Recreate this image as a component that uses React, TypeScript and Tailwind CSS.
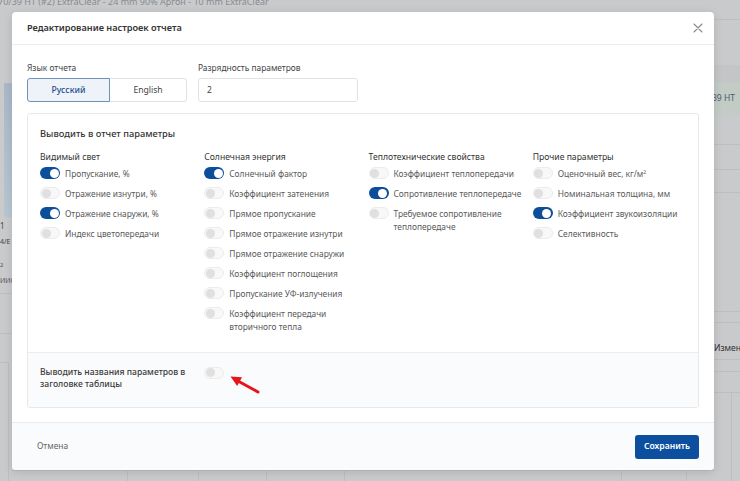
import React from "react";

type Item = { label: React.ReactNode; on?: boolean };

function Toggle({ on }: { on?: boolean }) {
  if (on) {
    return (
      <span className="flex h-[12px] w-[20px] shrink-0 items-center justify-end rounded-full bg-[#0d4e9b] px-[1.5px]">
        <span className="h-[9px] w-[9px] rounded-full bg-white" />
      </span>
    );
  }
  return (
    <span className="flex h-[12px] w-[20px] shrink-0 items-center justify-start rounded-full border border-[#ececec] bg-[#f8f8f8] px-[0.5px]">
      <span className="h-[9px] w-[9px] rounded-full bg-[#e0e0e0]" />
    </span>
  );
}

function Column({ title, items }: { title: string; items: Item[] }) {
  return (
    <div className="flex flex-col">
      <div className="mb-[3.5px] text-[8.6px] leading-[12px] text-[#333]">{title}</div>
      <div className="flex flex-col gap-[7px]">
        {items.map((it, i) => (
          <div key={i} className="flex items-start gap-[5px]">
            <span className="mt-[0.5px]">
              <Toggle on={it.on} />
            </span>
            <span className="text-[8.4px] leading-[13px] text-[#5a5a5a]">{it.label}</span>
          </div>
        ))}
      </div>
    </div>
  );
}

export default function App() {
  const cols: { title: string; items: Item[] }[] = [
    {
      title: "Видимый свет",
      items: [
        { label: "Пропускание, %", on: true },
        { label: "Отражение изнутри, %" },
        { label: "Отражение снаружи, %", on: true },
        { label: "Индекс цветопередачи" },
      ],
    },
    {
      title: "Солнечная энергия",
      items: [
        { label: "Солнечный фактор", on: true },
        { label: "Коэффициент затенения" },
        { label: "Прямое пропускание" },
        { label: "Прямое отражение изнутри" },
        { label: "Прямое отражение снаружи" },
        { label: "Коэффициент поглощения" },
        { label: "Пропускание УФ-излучения" },
        {
          label: (
            <>
              Коэффициент передачи
              <br />
              вторичного тепла
            </>
          ),
        },
      ],
    },
    {
      title: "Теплотехнические свойства",
      items: [
        { label: "Коэффициент теплопередачи" },
        { label: "Сопротивление теплопередаче", on: true },
        {
          label: (
            <>
              Требуемое сопротивление
              <br />
              теплопередаче
            </>
          ),
        },
      ],
    },
    {
      title: "Прочие параметры",
      items: [
        {
          label: (
            <>
              Оценочный вес, кг/м<sup className="text-[5px]">2</sup>
            </>
          ),
        },
        { label: "Номинальная толщина, мм" },
        { label: "Коэффициент звукоизоляции", on: true },
        { label: "Селективность" },
      ],
    },
  ];

  return (
    <div className="relative h-[481px] w-[740px] overflow-hidden bg-[#c9cacc] font-['Noto_Sans','Open_Sans',sans-serif]">
      {/* background page (dimmed) */}
      <div className="flex h-full w-full flex-col">
        <div className="h-[12px] overflow-hidden">
          <div className="-ml-[2px] -mt-[4px] whitespace-nowrap text-[9px] leading-[12px] text-[#8a8b8d]">
            70/39 HT (#2) ExtraClear - 24 mm 90% Аргон - 10 mm ExtraClear
          </div>
        </div>
        <div className="flex flex-1">
          {/* left sliver */}
          <div className="flex w-[12px] flex-col">
            <div className="h-[71px]" />
            <div className="ml-[4px] h-[134px] bg-gradient-to-b from-[#aab8c8] to-[#b8c6d4]" />
            <div className="mt-[4px] text-[8px] leading-[10px] text-[#444]">1</div>
            <div className="mt-[6px] whitespace-nowrap text-[7px] leading-[10px] text-[#444]">4/E</div>
            <div className="mt-[14px] text-[6px] leading-[8px] text-[#555]">2</div>
            <div className="mt-[8px] whitespace-nowrap text-[7px] leading-[8px] text-[#555]">ИИС</div>
            <div className="mt-[8px] h-[40px] border-t border-[#bdbec0]" />
            <div className="h-[29px] border-t border-[#bdbec0]" />
            <div className="mr-[3px] flex-1 border-r border-t border-[#bdbec0]" />
          </div>
          <div className="flex flex-1 flex-col justify-end">
            <div className="flex h-[11px] border-t border-[#bdbec0]">
              <div className="w-[116px] border-r border-[#bdbec0]" />
              <div className="w-[71px] border-r border-[#bdbec0]" />
              <div className="w-[68px] border-r border-[#bdbec0]" />
              <div className="w-[78px] border-r border-[#bdbec0]" />
              <div className="w-[277px] border-r border-[#bdbec0]" />
              <div className="w-[65px] border-r border-[#bdbec0]" />
            </div>
          </div>
          {/* right sliver */}
          <div className="flex w-[26px] flex-col">
            <div className="h-[8px] border-b border-[#bdbec0]" />
            <div className="h-[45px]" />
            <div className="h-[17px] bg-[#c3c5c7]" />
            <div className="flex h-[33px] items-center whitespace-nowrap bg-[#c2ccc4] text-[8.5px] text-[#4b5a6c]">
              <span className="-ml-[2px]">39 HT</span>
            </div>
            <div className="h-[30px] border-b border-[#bdbec0]" />
            <div className="h-[25px] border-b border-[#bdbec0]" />
            <div className="h-[23px] border-b border-[#bdbec0]" />
            <div className="h-[119px] border-b border-[#bdbec0]" />
            <div className="h-[11px] border-b border-[#bdbec0]" />
            <div className="h-[12px]" />
            <div className="h-[25px] whitespace-nowrap border-b border-[#bdbec0] text-[8.5px] leading-[25px] text-[#333]">
              Измен
            </div>
            <div className="h-[12px] border-b border-[#bdbec0]" />
            <div className="h-[21px] border-b border-[#bdbec0]" />
            <div className="flex flex-1">
              <div className="w-[18px] border-r border-[#bdbec0]" />
            </div>
          </div>
        </div>
      </div>

      {/* modal */}
      <div className="absolute left-[12px] top-[12px] flex h-[458px] w-[702px] flex-col overflow-hidden rounded-[4px] bg-white shadow-[0_2px_10px_rgba(0,0,0,0.12)]">
        {/* header */}
        <div className="flex h-[33px] shrink-0 items-center justify-between border-b border-[#ebebeb] pl-[15px] pr-[11px]">
          <span className="text-[9.2px] font-semibold text-[#333]">Редактирование настроек отчета</span>
          <svg width="10" height="10" viewBox="0 0 10 10" className="text-[#8a8a8a]">
            <path d="M1 1L9 9M9 1L1 9" stroke="currentColor" strokeWidth="1.1" strokeLinecap="round" />
          </svg>
        </div>

        {/* body */}
        <div className="flex flex-1 flex-col px-[15px] pb-[14px] pt-[17px]">
          <div className="flex gap-[11px]">
            <div className="flex flex-col">
              <div className="mb-[4px] text-[8.4px] leading-[12px] text-[#444]">Язык отчета</div>
              <div className="flex h-[24px] w-[160px]">
                <div className="flex w-[83px] items-center justify-center rounded-l-[3px] border border-[#6f90bd] bg-[#eef3fa] text-[8.6px] font-medium text-[#1e4f8e]">
                  Русский
                </div>
                <div className="flex flex-1 items-center justify-center rounded-r-[3px] border border-l-0 border-[#e2e2e2] text-[8.6px] text-[#444]">
                  English
                </div>
              </div>
            </div>
            <div className="flex flex-col">
              <div className="mb-[4px] text-[8.4px] leading-[12px] text-[#444]">Разрядность параметров</div>
              <div className="flex h-[24px] w-[160px] items-center rounded-[3px] border border-[#e2e2e2] px-[8px] text-[8.6px] text-[#444]">
                2
              </div>
            </div>
          </div>

          {/* params card */}
          <div className="mt-[11px] flex flex-1 flex-col rounded-[3px] border border-[#e8e8e8]">
            <div className="flex-1 px-[12px] pt-[14px]">
              <div className="text-[9.3px] font-medium leading-[12px] text-[#333]">Выводить в отчет параметры</div>
              <div className="mt-[11px] grid grid-cols-4 gap-x-[11px]">
                {cols.map((c, i) => (
                  <Column key={i} title={c.title} items={c.items} />
                ))}
              </div>
            </div>
            <div className="grid h-[55px] shrink-0 grid-cols-4 gap-x-[11px] rounded-b-[3px] border-t border-[#ececec] bg-[#fafbfc] px-[12px] pt-[13px]">
              <div className="text-[8.6px] font-medium leading-[12px] text-[#3a3a3a]">
                Выводить названия параметров в
                <br />
                заголовке таблицы
              </div>
              <div className="pt-[0.5px]">
                <Toggle />
              </div>
            </div>
          </div>
        </div>

        {/* footer */}
        <div className="flex h-[48px] shrink-0 items-center justify-between border-t border-[#ececec] bg-[#fafbfc] pl-[25px] pr-[15px]">
          <span className="text-[8.4px] text-[#666]">Отмена</span>
          <button className="flex h-[24px] w-[64px] items-center justify-center rounded-[3px] bg-[#0d4f9f] text-[8.6px] font-semibold text-white">
            Сохранить
          </button>
        </div>
      </div>

      {/* red annotation arrow */}
      <svg className="absolute left-[225px] top-[370px]" width="40" height="28" viewBox="0 0 40 28">
        <line x1="12.5" y1="10.7" x2="33" y2="22" stroke="#e8141c" strokeWidth="3" strokeLinecap="round" />
        <polygon points="5.5,6.5 17,7.2 12.2,16" fill="#e8141c" />
      </svg>
    </div>
  );
}
